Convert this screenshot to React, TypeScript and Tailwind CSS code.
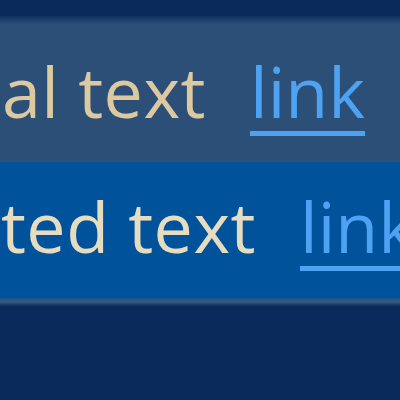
export default function App() {
  const rows = [
    { text: "al text", textEnd: "w-[206px]", bg: "bg-[#2c4f78]", color: "text-[#dcc9a0]", h: "h-[138px]", pt: "pt-[25px]" },
    { text: "ted text", textEnd: "w-[256px]", bg: "bg-[#00529b]", color: "text-[#e6dcc0]", h: "h-[136px]", pt: "pt-[22px]" },
  ];

  return (
    <div
      className="w-[400px] h-[400px] overflow-hidden bg-[#0b2a5c] flex flex-col"
      style={{ fontFamily: '"Open Sans", "Noto Sans", sans-serif' }}
    >
      {/* title band */}
      <div className="h-[16px] bg-[#0b2a5c]" />
      <div className="h-[8px] bg-gradient-to-b from-[#0f3262] to-[#2b4d76]" />

      {rows.map((r) => (
        <div key={r.text} className={`${r.h} ${r.bg} ${r.pt} flex items-start overflow-hidden`}>
          <div className={`${r.textEnd} shrink-0 flex justify-end`}>
            <span className={`whitespace-nowrap text-[70px] leading-[84px] tracking-[0.5px] ${r.color}`}>{r.text}</span>
          </div>
          <a className="ml-[44px] whitespace-nowrap text-[70px] leading-[84px] text-[#4ea2f2] underline decoration-[5px] underline-offset-[13px]">
            link
          </a>
        </div>
      ))}

      {/* separator */}
      <div className="h-[4px] bg-gradient-to-b from-[#1a5390] to-[#3a5a7c]" />
      <div className="h-[4px] bg-gradient-to-b from-[#3a5a7c] to-[#0e2d5e]" />
      <div className="flex-1 bg-[#0b2a5c]" />
    </div>
  );
}
